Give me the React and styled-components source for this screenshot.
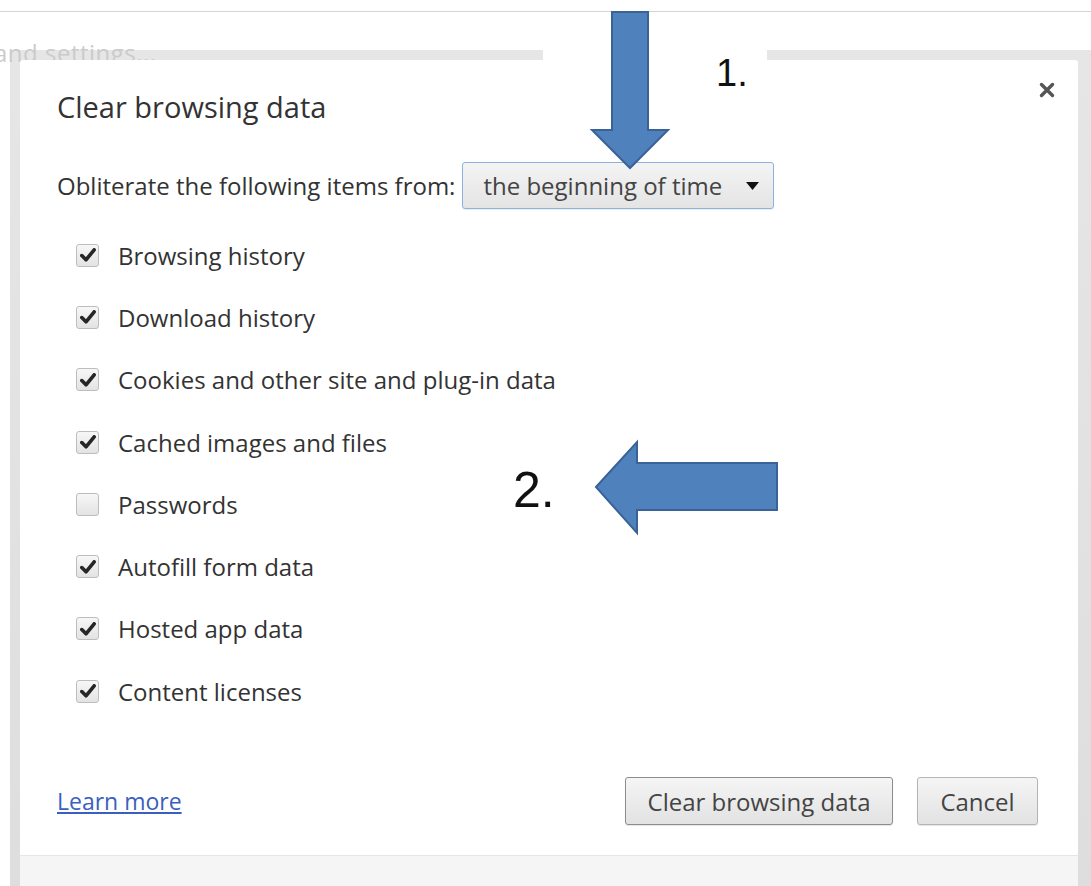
import React from "react";
import styled, { createGlobalStyle } from "styled-components";

const GlobalStyle = createGlobalStyle`
  html, body {
    margin: 0;
    padding: 0;
    background: #ffffff;
  }
  body {
    font-family: "Open Sans", "Noto Sans", sans-serif;
    color: #333333;
  }
`;

const Page = styled.div`
  position: relative;
  width: 1091px;
  height: 886px;
  overflow: hidden;
  background: #ffffff;
`;

const TopBar = styled.div`
  height: 11px;
  border-bottom: 1px solid #d4d4d4;
`;

const Backdrop = styled.div`
  padding: 38px 0 0 10px;
`;

const BehindText = styled.div`
  position: absolute;
  top: 38px;
  left: -6px;
  z-index: 0;
  font-size: 24px;
  line-height: 30px;
  color: #cbcbcb;
  letter-spacing: 0.5px;
`;

const DialogFrame = styled.div`
  background: linear-gradient(to bottom, #e6e6e6, #dedede);
  padding: 10px 13px 0 10px;
`;

const Dialog = styled.div`
  position: relative;
  z-index: 1;
  background: #ffffff;
  border-radius: 3px 3px 0 0;
  height: 826px;
  display: flex;
  flex-direction: column;
`;

const Header = styled.div`
  display: flex;
  justify-content: space-between;
  align-items: flex-start;
  padding: 21px 22px 0 37px;
`;

const Title = styled.h1`
  margin: 9px 0 0;
  font-size: 29px;
  line-height: 34px;
  font-weight: 400;
  color: #333333;
`;

const CloseButton = styled.button`
  width: 18px;
  height: 18px;
  padding: 0;
  border: 0;
  background: none;
  display: flex;
  align-items: center;
  justify-content: center;
  cursor: pointer;
`;

const Body = styled.div`
  padding: 38px 37px 0;
  flex: 1;
`;

const RangeRow = styled.div`
  display: flex;
  align-items: center;
  gap: 7px;
  font-size: 24px;
  color: #333333;
  margin-bottom: 15px;
`;

const Select = styled.div`
  width: 312px;
  height: 47px;
  box-sizing: border-box;
  display: flex;
  align-items: center;
  justify-content: space-between;
  padding: 0 14px 0 20px;
  border: 1px solid #8eb2e0;
  border-radius: 3px;
  background: linear-gradient(to bottom, #f4f4f4, #e4e4e4);
  box-shadow: 0 1px 1px rgba(0, 0, 0, 0.08);
  font-size: 24px;
  color: #444444;
`;

const CheckRow = styled.label`
  display: flex;
  align-items: center;
  gap: 19px;
  height: 62.3px;
  padding-left: 19px;
  font-size: 24px;
  color: #333333;
`;

const Box = styled.span`
  width: 23px;
  height: 23px;
  box-sizing: border-box;
  display: flex;
  align-items: center;
  justify-content: center;
  border: 1px solid #bdbdbd;
  border-radius: 3px;
  background: linear-gradient(to bottom, #f7f7f7, #e3e3e3);
`;

const Footer = styled.div`
  display: flex;
  align-items: center;
  justify-content: space-between;
  padding: 0 40px 30px 37px;
`;

const LearnMore = styled.a`
  font-size: 23px;
  color: #3b5fc0;
  text-decoration: underline;
`;

const Buttons = styled.div`
  display: flex;
  gap: 24px;
`;

const Button = styled.button`
  height: 48px;
  width: ${(p) => p.$w}px;
  box-sizing: border-box;
  border: 1px solid ${(p) => (p.$primary ? "#8c8c8c" : "#b4b4b4")};
  border-radius: 3px;
  background: linear-gradient(to bottom, #f5f5f5, #e2e2e2);
  box-shadow: 0 1px 1px rgba(0, 0, 0, 0.1);
  font-family: "Open Sans", "Noto Sans", sans-serif;
  font-size: 24px;
  color: #444444;
  padding: 0;
`;

const FooterBand = styled.div`
  height: 30px;
  background: #f5f5f5;
  border-top: 1px solid #e6e6e6;
`;

/* callouts drawn on top of the dialog */
const CalloutCover = styled.div`
  position: absolute;
  left: 543px;
  top: 12px;
  width: 224px;
  height: 48px;
  background: #ffffff;
  z-index: 2;
`;

const CalloutArrow = styled.svg`
  position: absolute;
  left: ${(p) => p.$x}px;
  top: ${(p) => p.$y}px;
  z-index: 3;
  overflow: visible;
`;

const CalloutNumber = styled.div`
  position: absolute;
  left: ${(p) => p.$x}px;
  top: ${(p) => p.$y}px;
  z-index: 3;
  font-family: "Liberation Sans", Arial, sans-serif;
  font-size: ${(p) => p.$size}px;
  line-height: 1;
  color: #111111;
`;

const items = [
  { label: "Browsing history", checked: true },
  { label: "Download history", checked: true },
  { label: "Cookies and other site and plug-in data", checked: true },
  { label: "Cached images and files", checked: true },
  { label: "Passwords", checked: false },
  { label: "Autofill form data", checked: true },
  { label: "Hosted app data", checked: true },
  { label: "Content licenses", checked: true },
];

function Check() {
  return (
    <svg width="16" height="14" viewBox="0 0 16 14">
      <path
        d="M1.8 7.6 L6 11.8 L14.2 1.8"
        fill="none"
        stroke="#262626"
        strokeWidth="3.6"
        strokeLinecap="round"
        strokeLinejoin="round"
      />
    </svg>
  );
}

export default function App() {
  return (
    <Page>
      <GlobalStyle />
      <TopBar />
      <BehindText>and settings...</BehindText>
      <Backdrop>
        <DialogFrame>
          <Dialog>
            <Header>
              <Title>Clear browsing data</Title>
              <CloseButton aria-label="Close">
                <svg width="16" height="16" viewBox="0 0 16 16">
                  <path
                    d="M2.5 2.5 L13.5 13.5 M13.5 2.5 L2.5 13.5"
                    stroke="#555555"
                    strokeWidth="3.4"
                    strokeLinecap="round"
                  />
                </svg>
              </CloseButton>
            </Header>
            <Body>
              <RangeRow>
                <span>Obliterate the following items from:</span>
                <Select>
                  <span>the beginning of time</span>
                  <svg width="13" height="8" viewBox="0 0 13 8">
                    <path d="M0 0 H13 L6.5 8 Z" fill="#111111" />
                  </svg>
                </Select>
              </RangeRow>
              {items.map((item) => (
                <CheckRow key={item.label}>
                  <Box>{item.checked && <Check />}</Box>
                  <span>{item.label}</span>
                </CheckRow>
              ))}
            </Body>
            <Footer>
              <LearnMore href="#">Learn more</LearnMore>
              <Buttons>
                <Button $primary $w={268}>
                  Clear browsing data
                </Button>
                <Button $w={121}>Cancel</Button>
              </Buttons>
            </Footer>
            <FooterBand />
          </Dialog>
        </DialogFrame>
      </Backdrop>

      <CalloutCover />
      <CalloutArrow $x={590} $y={12} width="80" height="158" viewBox="0 0 80 158">
        <polygon
          points="22,0 58,0 58,118 78,118 40,156 2,118 22,118"
          fill="#4f81bd"
          stroke="#3a6296"
          strokeWidth="2"
          strokeLinejoin="miter"
        />
      </CalloutArrow>
      <CalloutNumber $x={716} $y={54} $size={38}>
        1.
      </CalloutNumber>

      <CalloutNumber $x={513} $y={465} $size={50}>
        2.
      </CalloutNumber>
      <CalloutArrow $x={594} $y={440} width="186" height="96" viewBox="0 0 186 96">
        <polygon
          points="2,47 43,2 43,23 183,23 183,70 43,70 43,93"
          fill="#4f81bd"
          stroke="#3a6296"
          strokeWidth="2"
        />
      </CalloutArrow>
    </Page>
  );
}
